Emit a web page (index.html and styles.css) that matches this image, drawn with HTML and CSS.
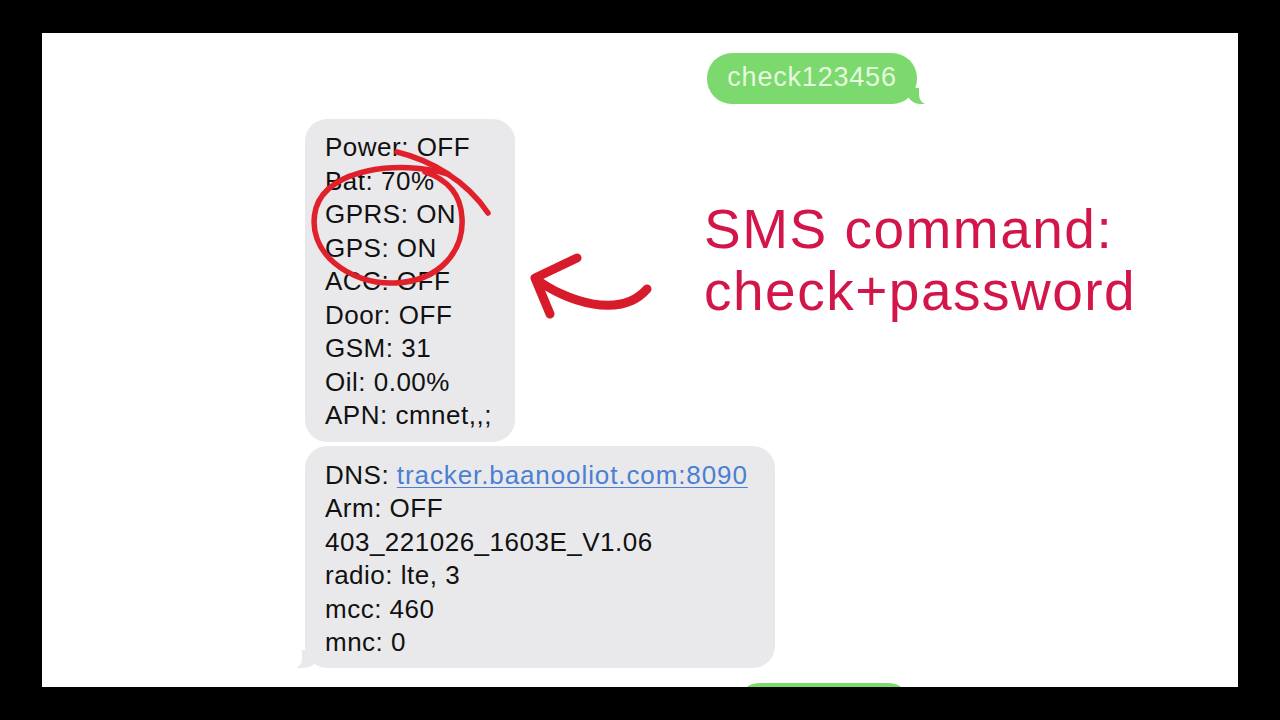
FILE: index.html
```html
<!DOCTYPE html>
<html>
  <head>
    <meta charset="utf-8" />
    <meta name="viewport" content="width=device-width, initial-scale=1">
    <title>SMS command: check+password</title>
    <link rel="stylesheet" href="styles.css">
  </head>
  <body>
    <div class="frame">
      <div class="thread">
        <div class="bubble out">check123456</div>
        <div class="bubble in first">
          <p>Power: OFF</p>
          <p>Bat: 70%</p>
          <p>GPRS: ON</p>
          <p>GPS: ON</p>
          <p>ACC: OFF</p>
          <p>Door: OFF</p>
          <p>GSM: 31</p>
          <p>Oil: 0.00%</p>
          <p>APN: cmnet,,;</p>
        </div>
        <div class="bubble in second">
          <p>DNS: <a href="#">tracker.baanooliot.com:8090</a></p>
          <p>Arm: OFF</p>
          <p>403_221026_1603E_V1.06</p>
          <p>radio: lte, 3</p>
          <p>mcc: 460</p>
          <p>mnc: 0</p>
        </div>
        <div class="bubble out next"></div>
      </div>

      <svg class="marks" viewBox="42 33 1196 654" width="1196" height="654">
        <!-- hand drawn circle round GPRS / GPS -->
        <path d="M397 152 C430 160 466 180 488 213" />
        <path d="M448 174 C400 160 328 168 316 208 C304 252 350 285 395 283 C441 281 464 250 462 218 C461 195 449 180 425 172" />
        <!-- arrow -->
        <path class="arrow" d="M536 279 C565 301 620 320 647 289" />
        <path class="arrow" d="M577 258 L535 278 L550 314" />
      </svg>

      <div class="caption">
        <div>SMS command:</div>
        <div>check+password</div>
      </div>
    </div>
  </body>
</html>
```

FILE: styles.css
```css
body{
  margin: 0;
  background: #000;
  font-family: "Liberation Sans", Arial, sans-serif;
}
.frame{
  position: relative;
  margin: 33px 42px;
  width: 1196px;
  height: 654px;
  background: #fff;
  overflow: hidden;
}
.thread{
  display: flex;
  flex-direction: column;
  margin-left: 263px;
  padding-top: 20px;
  width: 612px;
}
.bubble{
  position: relative;
  border-radius: 22px;
}
.bubble p{
  margin: 0;
}
.out{
  align-self: flex-end;
  width: 210px;
  background: #7bd96d;
  color: #e6f8df;
  font-size: 27px;
  letter-spacing: 0.8px;
  line-height: 45px;
  padding-top: 2px;
  padding-bottom: 4px;
  text-align: center;
  border-radius: 25px;
}
.out::after{
  content: "";
  position: absolute;
  right: -8px;
  bottom: 0;
  width: 18px;
  height: 16px;
  background: #7bd96d;
  border-bottom-left-radius: 14px 12px;
}
.out::before{
  content: "";
  position: absolute;
  right: -14px;
  bottom: -1px;
  width: 12px;
  height: 20px;
  background: #fff;
  border-bottom-left-radius: 10px;
  z-index: 1;
}
.in{
  align-self: flex-start;
  background: #e9e9eb;
  color: #111;
  font-size: 26px;
  letter-spacing: 0.5px;
  line-height: 33.5px;
  padding: 12px 20px 9px 20px;
}
.first{
  width: 170px;
  margin-top: 15px;
}
.second{
  width: 430px;
  margin-top: 4px;
  padding-top: 13px;
  padding-bottom: 8px;
}
.second::after{
  content: "";
  position: absolute;
  left: -8px;
  bottom: 0;
  width: 22px;
  height: 18px;
  background: #e9e9eb;
  border-bottom-right-radius: 16px 14px;
}
.second::before{
  content: "";
  position: absolute;
  left: -15px;
  bottom: -1px;
  width: 12px;
  height: 22px;
  background: #fff;
  border-bottom-right-radius: 10px;
  z-index: 1;
}
.second a{
  color: #4a7fd4;
  letter-spacing: 0.9px;
  text-decoration: underline;
  text-decoration-thickness: 1px;
  text-underline-offset: 3px;
}
.next{
  width: 170px;
  height: 40px;
  margin-top: 15px;
  margin-right: 8px;
  padding: 0;
}
.next::before, .next::after{
  display: none;
}
.marks{
  position: absolute;
  left: 0;
  top: 0;
  pointer-events: none;
}
.marks path{
  fill: none;
  stroke: #e0212c;
  stroke-width: 5.5;
  stroke-linecap: round;
  stroke-linejoin: round;
}
.marks path.arrow{
  stroke: #d81b2b;
  stroke-width: 9;
}
.caption{
  position: absolute;
  left: 662px;
  top: 166px;
  color: #d3164a;
  font-size: 55px;
  letter-spacing: 1.5px;
  line-height: 61.5px;
}
```
